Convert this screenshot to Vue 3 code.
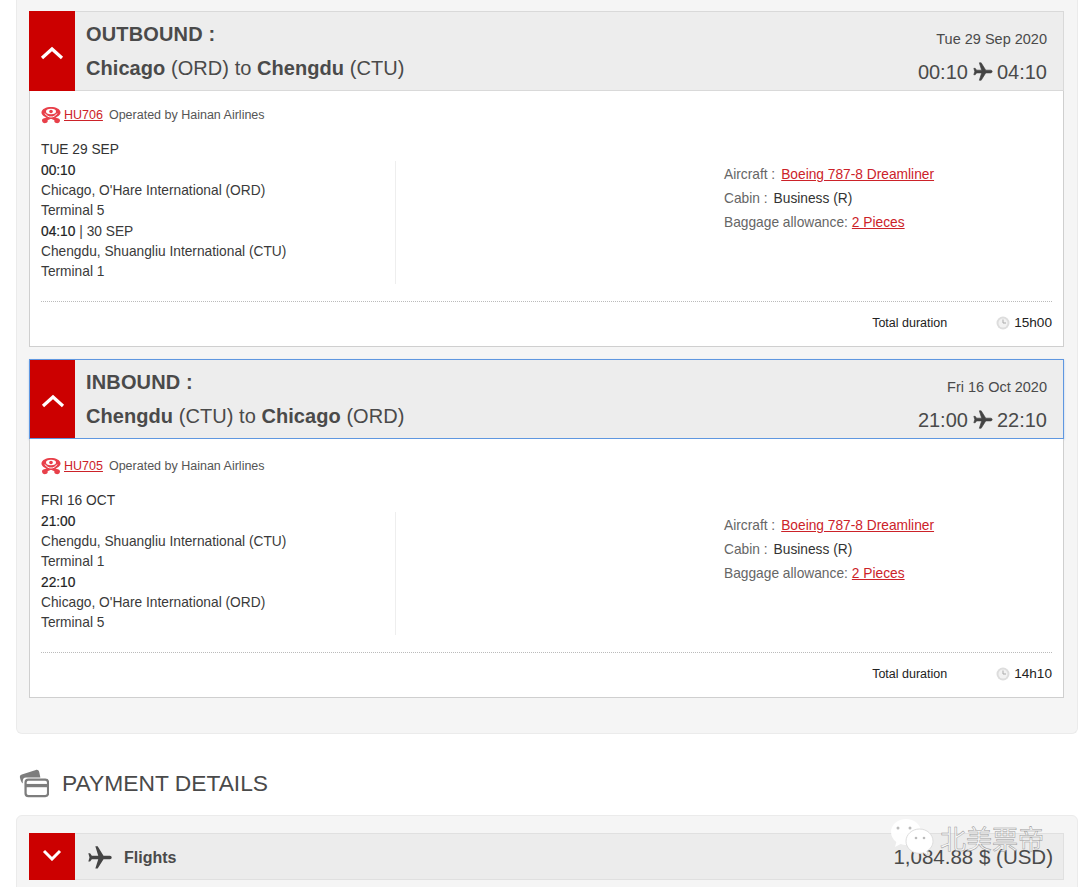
<script setup>
const legs = [
  {
    title: 'OUTBOUND :',
    from: 'Chicago', fromCode: '(ORD)', to: 'Chengdu', toCode: '(CTU)',
    date: 'Tue 29 Sep 2020', dep: '00:10', arr: '04:10',
    flight: 'HU706', day: 'TUE 29 SEP',
    depPlace: "Chicago, O'Hare International (ORD)", depTerm: 'Terminal 5',
    arrNote: ' | 30 SEP',
    arrPlace: 'Chengdu, Shuangliu International (CTU)', arrTerm: 'Terminal 1',
    duration: '15h00', focused: false,
  },
  {
    title: 'INBOUND :',
    from: 'Chengdu', fromCode: '(CTU)', to: 'Chicago', toCode: '(ORD)',
    date: 'Fri 16 Oct 2020', dep: '21:00', arr: '22:10',
    flight: 'HU705', day: 'FRI 16 OCT',
    depPlace: 'Chengdu, Shuangliu International (CTU)', depTerm: 'Terminal 1',
    arrNote: '',
    arrPlace: "Chicago, O'Hare International (ORD)", arrTerm: 'Terminal 5',
    duration: '14h10', focused: true,
  },
]

const plane = 'M21 16v-2l-8-5V3.500C13 2.670 12.330 2 11.500 2S10 2.670 10 3.500V9l-8 5v2l8-2.500V19l-2 1.500V22l3.500-1 3.500 1v-1.500L13 19v-5.500l8 2.500z'
</script>

<template>
  <div class="page">
    <section class="panel trip">
      <article v-for="leg in legs" :key="leg.flight" class="leg">
        <header class="leg-head" :class="{ focused: leg.focused }">
          <div class="toggle">
            <svg width="24" height="14" viewBox="0 0 24 14"><path d="M2 12 12 3l10 9" fill="none" stroke="#fff" stroke-width="3.200" /></svg>
          </div>
          <div class="route">
            <h2>{{ leg.title }}</h2>
            <p><b>{{ leg.from }}</b> {{ leg.fromCode }} to <b>{{ leg.to }}</b> {{ leg.toCode }}</p>
          </div>
          <div class="times">
            <div class="date">{{ leg.date }}</div>
            <div class="clock">
              <span>{{ leg.dep }}</span>
              <svg class="plane" width="22" height="22" viewBox="0 0 24 24"><path :d="plane" fill="#444" stroke="#444" stroke-width=".7" transform="rotate(90 12 12)" /></svg>
              <span>{{ leg.arr }}</span>
            </div>
          </div>
        </header>

        <div class="leg-body">
          <div class="carrier">
            <svg width="20" height="17" viewBox="0 0 20 17">
              <path d="M10 0C5 0 1 2 .5 5c-.3 2.500 2 4.500 5 5.500C3.500 11 1 11.500 1 13.500 1 15.500 3 16.500 5 16c1.500-.4 2-1.500 1.500-2.500C8 12.500 9 12 10 12s2 .5 3.500 1.500C13 14.500 13.500 15.600 15 16c2 .5 4-.5 4-2.500 0-2-2.500-2.500-4.500-3 3-1 5.300-3 5-5.500C19 2 15 0 10 0Z" fill="#e8404a" />
              <ellipse cx="10" cy="4.500" rx="5" ry="2.800" fill="#fff" />
              <circle cx="10" cy="4.500" r="1.800" fill="#e8404a" />
              <path d="M4 6.500c1.500 2.500 4 3.500 6 3.500s4.500-1 6-3.500" fill="none" stroke="#fff" />
            </svg>
            <a class="link">{{ leg.flight }}</a>
            <span>Operated by Hainan Airlines</span>
          </div>

          <div class="day">{{ leg.day }}</div>
          <div class="segment">
            <div class="stops">
              <div><b>{{ leg.dep }}</b></div>
              <div>{{ leg.depPlace }}</div>
              <div>{{ leg.depTerm }}</div>
              <div><b>{{ leg.arr }}</b>{{ leg.arrNote }}</div>
              <div>{{ leg.arrPlace }}</div>
              <div>{{ leg.arrTerm }}</div>
            </div>
            <dl class="facts">
              <div><dt>Aircraft :</dt><dd><a class="link">Boeing 787-8 Dreamliner</a></dd></div>
              <div><dt>Cabin :</dt><dd>Business (R)</dd></div>
              <div><dt>Baggage allowance:</dt><dd><a class="link">2 Pieces</a></dd></div>
            </dl>
          </div>

          <footer class="total">
            <span class="total-label">Total duration</span>
            <svg width="14" height="14" viewBox="0 0 14 14">
              <circle cx="7" cy="7" r="6.500" fill="#ddd" />
              <circle cx="7" cy="7" r="4.500" fill="#f2f2f2" />
              <path d="M7 3.500V7h3" fill="none" stroke="#aaa" />
            </svg>
            <span class="total-time">{{ leg.duration }}</span>
          </footer>
        </div>
      </article>
    </section>

    <h1 class="section-title">
      <svg width="30" height="30" viewBox="0 0 32 32">
        <path d="M1 10c-.3-1.500.5-2.600 2-3l15-5c1.800-.5 3 .4 3.500 2l1.300 6H7.500C5 10 4 11.500 4 14v2.500C2.500 15 1.500 12.500 1 10Z" fill="#7d7d7d" />
        <rect x="7" y="12.500" width="24" height="17.500" rx="3" fill="none" stroke="#7d7d7d" stroke-width="2.400" />
        <rect x="7" y="17" width="24" height="3.500" fill="#7d7d7d" />
      </svg>
      PAYMENT DETAILS
    </h1>

    <section class="panel payment">
      <div class="pay-row">
        <div class="toggle small">
          <svg width="20" height="12" viewBox="0 0 20 12"><path d="M2 2l8 8 8-8" fill="none" stroke="#fff" stroke-width="3" /></svg>
        </div>
        <svg class="pay-plane" width="28" height="28" viewBox="0 0 24 24"><path :d="plane" fill="#444" transform="rotate(90 12 12)" /></svg>
        <strong>Flights</strong>
        <span class="amount">1,084.88 $ (USD)</span>
      </div>
    </section>

    <div class="watermark">
      <svg width="44" height="38" viewBox="0 0 44 38">
        <path d="M16 1C7.500 1 1 6.800 1 14c0 4 2 7.500 5.300 9.900L5 29l5.600-3c1.700.5 3.500.9 5.400.9 8.500 0 15-5.800 15-13S24.500 1 16 1Z" fill="#fff" fill-opacity=".95" />
        <path d="M29.500 11C22 11 16 16.500 16 23.200S22 35.400 29.500 35.400c1.400 0 2.700-.2 4-.6l4.600 2.400-1.200-4c3.500-2.200 6.100-5.700 6.100-10C43 16.500 37 11 29.500 11Z" fill="#fff" stroke="#ddd" stroke-width="1" />
        <circle cx="8" cy="10" r="1.500" fill="#bbb" />
        <circle cx="20" cy="10" r="1.500" fill="#bbb" />
        <circle cx="26" cy="20" r="1.300" fill="#bbb" />
        <circle cx="34" cy="20" r="1.300" fill="#bbb" />
      </svg>
      <span>北美票帝</span>
    </div>
  </div>
</template>

<style scoped>
.page {
  position: relative;
  height: 887px;
  overflow: hidden;
  background: #fff;
  font-family: "Liberation Sans", Arial, sans-serif;
  font-size: 13.750px;
  color: #333;
}

.panel {
  margin: 0 2px 0 16px;
  background: #f5f5f5;
  border: 1px solid #ebebeb;
  border-radius: 6px;
}

.trip {
  border-top: 0;
  border-radius: 0 0 6px 6px;
  padding: 11px 13px 35px 12px;
}

.leg + .leg {
  margin-top: 12px;
}

.leg-head {
  display: flex;
  height: 80px;
  box-sizing: border-box;
  background: #ededed;
  border: 1px solid #d9d9d9;
}

.leg-head.focused {
  border-color: #5f97e0;
  box-shadow: 0 1px 2px rgba(95, 151, 224, 0.4);
}

.toggle {
  flex: none;
  width: 46px;
  margin: -1px 0 -1px -1px;
  background: #cc0000;
  display: flex;
  align-items: center;
  justify-content: center;
  padding-top: 3px;
  box-sizing: border-box;
}

.focused .toggle {
  width: 45px;
  margin: 0;
}

.route {
  flex: 1;
  padding: 10px 0 0 11px;
  color: #4a4a4a;
}

.route h2 {
  margin: 0;
  font-size: 20px;
  line-height: 24px;
  font-weight: 700;
  letter-spacing: 0.15px;
}

.route p {
  margin: 9px 0 0;
  font-size: 20px;
  line-height: 26px;
  letter-spacing: 0.06px;
}

.times {
  padding: 17px 16px 0 0;
  text-align: right;
  color: #4a4a4a;
}

.date {
  font-size: 14.500px;
  line-height: 20px;
}

.clock {
  display: flex;
  align-items: center;
  justify-content: flex-end;
  margin-top: 11px;
  font-size: 20px;
  line-height: 24px;
}

.plane {
  margin: 0 3px 0 4px;
}

.leg-body {
  background: #fff;
  border: 1px solid #cfcfcf;
  border-top: 0;
  padding: 14px 11px 0;
  height: 256px;
  box-sizing: border-box;
}

.leg-head.focused + .leg-body {
  height: 259px;
  padding-top: 17px;
}

.carrier {
  display: flex;
  align-items: center;
  height: 20px;
  font-size: 12.500px;
  color: #555;
}

.link {
  color: #cc2229;
  text-decoration: underline;
}

.carrier .link {
  margin: 0 6px 0 3px;
}

.day {
  margin-top: 15px;
  line-height: 20px;
}

.segment {
  display: flex;
  margin-top: 1px;
}

.stops {
  width: 354px;
  height: 123px;
  border-right: 1px solid #eee;
  line-height: 20.200px;
  color: #3a3a3a;
}

.stops b {
  font-weight: 400;
  color: #222;
  -webkit-text-stroke: 0.2px #222;
}

.facts {
  margin: 2px 0 0 328px;
  line-height: 24px;
}

.facts div {
  display: flex;
}

.facts dt {
  color: #666;
  margin-right: 6px;
}

.facts div:last-child dt {
  margin-right: 4px;
}

.facts dd {
  margin: 0;
  color: #333;
}

.total {
  display: flex;
  align-items: center;
  height: 41px;
  margin-top: 17px;
  border-top: 1px dotted #bbb;
  font-size: 12.500px;
  color: #222;
}

.total-label {
  margin-left: auto;
  margin-right: 49px;
}

.total-time {
  margin-left: 4px;
  font-size: 13.600px;
}

.section-title {
  display: flex;
  align-items: center;
  gap: 13px;
  margin: 25px 0 0 19px;
  height: 48px;
  font-size: 22.800px;
  font-weight: 400;
  color: #4a4a4a;
}

.payment {
  margin-top: 8px;
  padding: 17px 13px 40px 12px;
}

.pay-row {
  display: flex;
  align-items: center;
  height: 47px;
  box-sizing: border-box;
  background: #ececec;
  border: 1px solid #e0e0e0;
  color: #4a4a4a;
}

.toggle.small {
  align-self: stretch;
  padding-top: 0;
  padding-bottom: 3px;
}

.pay-plane {
  margin: 3px 0 0 11px;
}

.pay-row strong {
  margin-left: 10px;
  padding-top: 2px;
  font-size: 16px;
}

.amount {
  margin-left: auto;
  margin-right: 10px;
  font-size: 20.500px;
}

.watermark {
  position: absolute;
  left: 890px;
  top: 818px;
  display: flex;
  align-items: flex-start;
  gap: 6px;
}

.watermark span {
  font-family: "Noto Sans CJK SC", sans-serif;
  font-size: 26px;
  line-height: 40px;
  color: rgba(255, 255, 255, 0.6);
  -webkit-text-stroke: 0.5px #999;
}
</style>
